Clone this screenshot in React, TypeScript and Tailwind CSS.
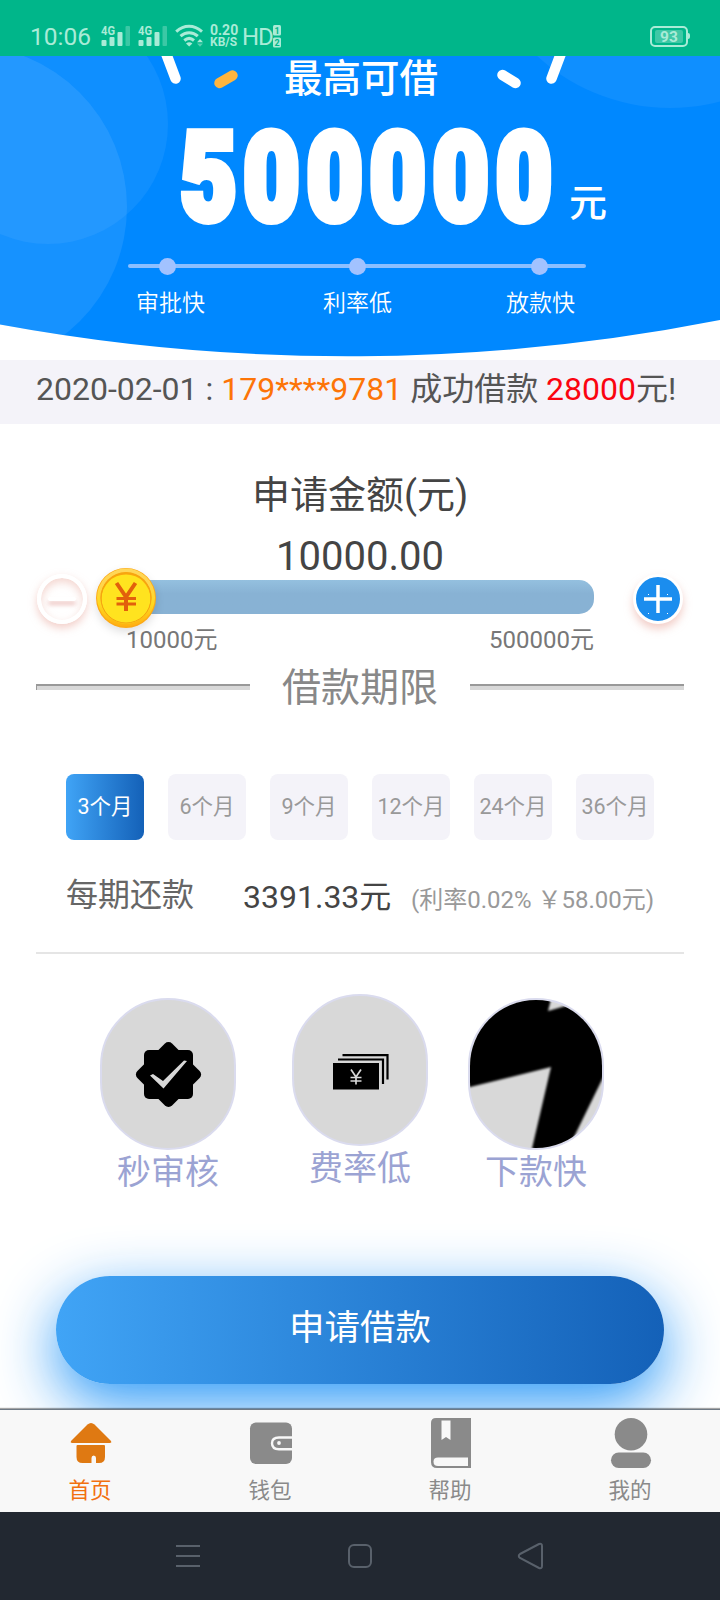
import { useState } from "react"

type Tab = { key: string; label: string }

const MONTHS = [3, 6, 9, 12, 24, 36]

const TABS: Tab[] = [
  { key: "home", label: "首页" },
  { key: "wallet", label: "钱包" },
  { key: "help", label: "帮助" },
  { key: "mine", label: "我的" }
]

// ===== status bar =====
function Signal() {
  return (
    <svg width="30" height="22" viewBox="0 0 30 22" fill="#a9ebd7">
      <text x="0" y="9.5" fontSize="12" fontWeight="700" fontFamily="Roboto, sans-serif" textLength="14" lengthAdjust="spacingAndGlyphs">4G</text>
      <rect x="0.5" y="15" width="5" height="6" rx="1" />
      <rect x="8.5" y="12" width="5" height="9" rx="1" />
      <rect x="16.5" y="7" width="5" height="14" rx="1" />
      <rect x="24.5" y="1" width="4.5" height="20" rx="1" opacity="0.35" />
    </svg>
  )
}

function StatusBar() {
  return (
    <div className="flex h-14 items-center bg-[#00b68a] pt-4 pl-[30px] text-[#a9ebd7]">
      <span className="w-[71px] pt-0.5 text-[24.5px] leading-6">10:06</span>
      <Signal />
      <span className="w-[7px]" />
      <Signal />
      <svg className="ml-[7px]" width="30" height="24" viewBox="0 0 30 24" fill="none" stroke="#a9ebd7" strokeWidth="3">
        <path d="M1.2 7.6C9 0.6 19 0.6 27 7.6" />
        <path d="M5.5 12.2C10.5 7.6 17.8 7.6 22.8 12.2" />
        <path d="M9.3 16.5C12.5 13.7 15.8 13.7 19 16.5" />
        <path d="M14.2 22.5L11 19.5Q14.2 16.8 17.4 19.5Z" fill="#a9ebd7" stroke="none" />
        <path d="M22 18.2L25 15L28 18.2Z" fill="#a9ebd7" stroke="none" />
        <path d="M22 19.5L25 22.7L28 19.5Z" fill="#a9ebd7" stroke="none" opacity="0.5" />
      </svg>
      <div className="ml-[5px] w-[32px] font-bold">
        <div className="text-sm leading-[11px]">0.20</div>
        <div className="text-xs leading-[12px]">KB/S</div>
      </div>
      <span className="w-[31px] pt-0.5 text-[24px] leading-6 tracking-[-1px]">HD</span>
      <svg width="9" height="23" viewBox="0 0 9 23">
        <rect x="0" y="0" width="8" height="10.5" rx="1.5" fill="#a9ebd7" />
        <rect x="0" y="12.5" width="8" height="10" rx="1.5" fill="#a9ebd7" />
        <g fill="#00b68a" fontSize="9" fontWeight="700" fontFamily="Roboto, sans-serif" textAnchor="middle">
          <text x="4" y="8.5">1</text>
          <text x="4" y="20.7">2</text>
        </g>
      </svg>
      <div className="ml-auto flex h-[21px] w-[38px] items-center justify-center rounded-[5px] border-2 border-[#a9ebd7]">
        <span className="h-[13px] w-7 rounded-xs bg-[#3fc8a6] text-center text-[15.5px] leading-[14px] font-bold">93</span>
      </div>
      <span className="mr-[30px] h-1.5 w-0.5 rounded-r bg-[#a9ebd7]" />
    </div>
  )
}

// ===== banner =====
function Banner() {
  return (
    <div className="relative h-[304px] overflow-hidden text-white">
      <svg className="absolute inset-0" width="720" height="304" viewBox="0 56 720 304">
        <clipPath id="curve">
          <path d="M0 56H720V320A1923 1923 0 0 1 0 324.5Z" />
        </clipPath>
        <g clipPath="url(#curve)">
          <rect y="56" width="720" height="304" fill="#0088ff" />
          <circle cx="48" cy="124" r="120" fill="#fff" opacity="0.06" />
          <circle cx="-35" cy="207" r="162" fill="#fff" opacity="0.085" />
          <circle cx="670" cy="-88" r="196" fill="#fff" opacity="0.06" />
        </g>
        <g strokeLinecap="round" stroke="#fff" strokeWidth="10.5">
          <path d="M164 48L175.5 78.5" />
          <path d="M563 48L551.5 78.5" />
          <path d="M502.5 75L515.5 83" />
          <path d="M219.5 83L232.5 75.5" stroke="#ffb53e" />
        </g>
      </svg>

      <div className="relative">
        <div className="pt-[3px] pl-[284px] text-[38.5px] leading-10 font-medium">最高可借</div>
        <div className="mt-0.5 flex h-[155px]">
          <div className="ml-[177px] w-[392px]">
            <span className="inline-block origin-left scale-x-[0.79] pl-1 text-[123px] leading-[155px] font-black tracking-[8.6px] [-webkit-text-stroke:8px_#fff]">
              500000
            </span>
          </div>
          <span className="mt-[82px] text-[38px] leading-10 font-medium">元</span>
        </div>

        <div className="mt-[8px] ml-32 flex h-1 w-[458px] items-center rounded-full bg-[#8cbfff] pl-[31px]">
          <span className="size-[17px] rounded-full bg-[#a2c2ff]" />
          <span className="ml-[173px] size-[17px] rounded-full bg-[#a2c2ff]" />
          <span className="ml-[165px] size-[17px] rounded-full bg-[#a2c2ff]" />
        </div>
        <div className="mt-6 flex pl-[136px] text-[23px] leading-6 font-[350]">
          <span>审批快</span>
          <span className="ml-[118px]">利率低</span>
          <span className="ml-[114px]">放款快</span>
        </div>
      </div>
    </div>
  )
}

// ===== amount slider =====
function Coin() {
  return (
    <svg className="relative drop-shadow-[0_4px_4px_rgba(0,0,0,0.12)]" width="60" height="62" viewBox="0 0 60 62">
      <defs>
        <linearGradient id="coin" x1="0" y1="0" x2="0" y2="1">
          <stop offset="0" stopColor="#ffd75a" />
          <stop offset="0.3" stopColor="#ffd54a" />
          <stop offset="0.6" stopColor="#ffd91f" />
          <stop offset="1" stopColor="#ffb010" />
        </linearGradient>
      </defs>
      <circle cx="30" cy="31" r="30" fill="#fda915" />
      <circle cx="30" cy="30.5" r="29" fill="url(#coin)" />
      <circle cx="30" cy="30.5" r="25.5" fill="#fba50f" />
      <circle cx="30" cy="32" r="24.5" fill="#ffe31f" />
      <circle cx="30" cy="31" r="25" fill="none" stroke="#f5a511" strokeWidth="1" />
      <g stroke="#e2600c" strokeWidth="4" fill="none">
        <path d="M20.5 16L30 30L39.5 16" />
        <path d="M30 29V44" />
        <path d="M20.5 31.5H40M20.5 37H40" strokeWidth="3" />
      </g>
    </svg>
  )
}

function AmountSlider() {
  return (
    <div>
      <div className="-mt-[9px] flex h-[62px] items-center">
        <button className="mt-0.5 ml-[37px] flex size-[50px] items-center justify-center rounded-full border-4 border-white shadow-[0_4px_8px_rgba(235,180,170,0.65),inset_0_4px_8px_rgba(235,180,170,0.55)]">
          <span className="h-1 w-7 rounded-full bg-white shadow-[0_4px_4px_rgba(235,190,185,0.9)]" />
        </button>
        <div className="ml-[9px] flex w-[498px] items-center">
          <Coin />
          <div className="-mt-0.5 -ml-[30px] h-[34px] flex-1 rounded-r-[15px] bg-linear-to-b from-[#94c0df] to-[#88b2d4] to-40%" />
        </div>
        <button className="mt-0.5 ml-[39px] flex size-[50px] items-center justify-center rounded-full border-[3px] border-white bg-[#1b8dee] shadow-[0_5px_8px_rgba(235,180,170,0.65)]">
          <svg width="44" height="44" viewBox="0 0 44 44" stroke="#fff" strokeWidth="3.5">
            <path d="M8 22H36M22 8V36" />
            <path d="M12 17.5h1M31 17.5h1M12 36.5h1M31 36.5h1" strokeWidth="1" />
          </svg>
        </button>
      </div>
      <div className="mt-px flex justify-between px-[126px] text-2xl leading-5 text-[#777]">
        <span>10000元</span>
        <span>500000元</span>
      </div>
    </div>
  )
}

// ===== feature icons =====
function VerifiedIcon() {
  return (
    <svg width="132" height="148" viewBox="102 1000 132 148">
      <rect x="144" y="1050" width="49" height="49" rx="5" />
      <rect x="144" y="1050" width="49" height="49" rx="5" transform="rotate(45 168.5 1074.5)" />
      <path d="M150 1075.5L153 1074L163 1081L184 1060.5L187 1061L163.5 1088.5Z" fill="#d8d8d8" />
    </svg>
  )
}

function CashIcon() {
  return (
    <svg width="132" height="148" viewBox="294 996 132 148">
      <rect x="333" y="1063" width="46" height="26.5" />
      <path d="M338 1059.5H383V1084M342.5 1055.2H387.5V1079.5" fill="none" stroke="#000" strokeWidth="2.2" />
      <path d="M351 1069.5L356 1077L361 1069.5M356 1077V1084.5M350.5 1077.5H361.5M350.5 1081H361.5" fill="none" stroke="#d8d8d8" strokeWidth="1.7" />
    </svg>
  )
}

function BoltIcon() {
  return (
    <svg width="132" height="148" viewBox="470 1000 132 148">
      <path
        d="M450 980H556L548 1011L569 1005L600 980H640V1002L574 1137L560 1170H527L551 1067L450 1092Z"
        className="blur-[0.8px]"
      />
    </svg>
  )
}

function Feature({ icon, label }: { icon: React.ReactNode; label: string }) {
  return (
    <div className="flex w-[136px] flex-col items-center">
      <div className="h-[152px] w-[136px] overflow-hidden rounded-[68px] border-2 border-[#dadbee] bg-[#d8d8d8]">
        {icon}
      </div>
      <span className="mt-0.5 text-[34px] leading-10 text-[#9ba3d3]">{label}</span>
    </div>
  )
}

// ===== tab bar =====
function TabIcon({ name }: { name: string }) {
  if (name === "home") {
    return (
      <svg width="50" height="50" viewBox="0 0 50 50" fill="#df7912">
        <path d="M22.5 6.5Q26 3.5 29.5 6.5L45.5 22.5Q47.5 25 44.5 25H7.5Q4.5 25 6.5 22.5Z" />
        <path d="M11.5 28Q11.5 27 12.5 27H39Q40 27 40 28V39Q40 45 34 45H31V40Q31 37.5 28.7 37.5Q26.5 37.5 26.5 40V45H17.5Q11.5 45 11.5 39Z" />
      </svg>
    )
  }
  if (name === "wallet") {
    return (
      <svg width="50" height="50" viewBox="0 0 50 50">
        <rect x="5" y="4.5" width="42" height="41.5" rx="6" fill="#8a8a8a" />
        <path d="M47 19.5H34Q27 19.5 27 25.3Q27 31.2 34 31.2H47" fill="none" stroke="#f8f8f8" strokeWidth="2.4" />
        <circle cx="34" cy="25" r="1.9" fill="#f8f8f8" />
      </svg>
    )
  }
  if (name === "help") {
    return (
      <svg width="50" height="50" viewBox="0 0 50 50">
        <path d="M11 0H46V50H12Q6 50 6 44V5Q6 0 11 0Z" fill="#8a8a8a" />
        <path d="M16.5 2.5H25.5V22L21 19L16.5 22Z" fill="#f8f8f8" />
        <path d="M13 39.5H43V48H13Q8.5 48 8.5 43.7Q8.5 39.5 13 39.5Z" fill="#f8f8f8" />
      </svg>
    )
  }
  return (
    <svg width="50" height="50" viewBox="0 0 50 50" fill="#8a8a8a">
      <circle cx="26" cy="16.3" r="16.3" />
      <rect x="6" y="34.5" width="40" height="15.5" rx="7.7" />
    </svg>
  )
}

export default function App() {
  const [month, setMonth] = useState(3)
  const [tab, setTab] = useState("home")

  return (
    <div className="flex h-[1600px] w-[720px] flex-col overflow-hidden bg-white font-['Roboto','Noto_Sans_CJK_SC',sans-serif]">
      <StatusBar />
      <Banner />

      <div className="h-16 bg-[#f4f3f9] pl-9 text-[32px] leading-[58px] whitespace-nowrap text-[#555]">
        2020-02-01 : <span className="text-[#fd7407]">179****9781</span> 成功借款 <span className="text-[#fb0410]">28000</span>元!
      </div>

      <div className="mt-[51px] text-center text-[38px] leading-10 text-[#444]">申请金额(元)</div>
      <div className="mt-[22px] text-center text-[40px] leading-10 text-[#444]">10000.00</div>
      <div className="-mt-px">
        <AmountSlider />
      </div>

      <div className="mt-[18px] flex items-center justify-between px-9">
        <div className="-mt-0.5 h-1.5 w-[214px] border-t-2 border-l border-[#999] bg-[#d8d8d8]" />
        <span className="text-[39px] leading-10 text-[#888]">借款期限</span>
        <div className="-mt-0.5 h-1.5 w-[214px] border-t-2 border-[#999] bg-[#d8d8d8]" />
      </div>

      <div className="mt-[66px] flex gap-6 pl-[66px]">
        {MONTHS.map(m => (
          <button
            key={m}
            onClick={() => setMonth(m)}
            className={
              m === month
                ? "h-[66px] w-[78px] rounded-lg bg-linear-to-r from-[#40a4f6] to-[#1461b8] text-[21.5px] whitespace-nowrap text-white"
                : "h-[66px] w-[78px] rounded-lg bg-[#f4f3f9] text-[21.5px] whitespace-nowrap text-[#999]"
            }
          >
            {m}个月
          </button>
        ))}
      </div>

      <div className="mx-9 mt-[37px] flex h-[77px] border-b-2 border-[#e5e5e5] pl-[30px]">
        <span className="w-[177px] text-[32px] leading-[36px] text-[#666]">每期还款</span>
        <span className="w-[168px] text-[32px] leading-10 text-[#444]">3391.33元</span>
        <span className="text-2xl leading-[47px] whitespace-nowrap text-[#999]">(利率0.02% ￥58.00元)</span>
      </div>

      <div className="mt-10 flex pl-[100px]">
        <div className="pt-1">
          <Feature icon={<VerifiedIcon />} label="秒审核" />
        </div>
        <div className="ml-14">
          <Feature icon={<CashIcon />} label="费率低" />
        </div>
        <div className="ml-10 pt-1">
          <Feature icon={<BoltIcon />} label="下款快" />
        </div>
      </div>

      <button className="mx-14 mt-[84px] h-[108px] shrink-0 rounded-full bg-linear-to-r from-[#40a4f6] to-[#1461b8] pb-0.5 text-[35.5px] text-white shadow-[0_20px_60px_rgba(33,147,247,0.95)]">
        申请借款
      </button>

      <div className="relative mt-auto flex h-[103px] shrink-0 border-t border-[#6f7a85] bg-[#f8f8f8] shadow-[0_-1px_1px_rgba(0,0,0,0.35)]">
        {TABS.map(t => (
          <button key={t.key} onClick={() => setTab(t.key)} className="flex flex-1 flex-col items-center pt-2">
            <TabIcon name={t.key} />
            <span className={t.key === tab ? "mt-[11px] text-[21.5px] leading-6 text-[#f2700f]" : "mt-[11px] text-[21.5px] leading-6 text-[#8a8a8a]"}>
              {t.label}
            </span>
          </button>
        ))}
      </div>

      {/* system navigation */}
      <div className="relative flex h-[88px] shrink-0 items-center bg-[#222831] pl-[176px]">
        <svg width="368" height="30" viewBox="176 1541 368 30" fill="none" stroke="#59616b" strokeWidth="2">
          <path d="M176 1546H200M176 1556H200M176 1566H200" />
          <rect x="349" y="1545" width="22" height="22" rx="5" />
          <path d="M520 1554L539 1544Q542 1543 542 1546V1566Q542 1569 539 1568L520 1558Q517.5 1556 520 1554Z" />
        </svg>
      </div>
    </div>
  )
}
